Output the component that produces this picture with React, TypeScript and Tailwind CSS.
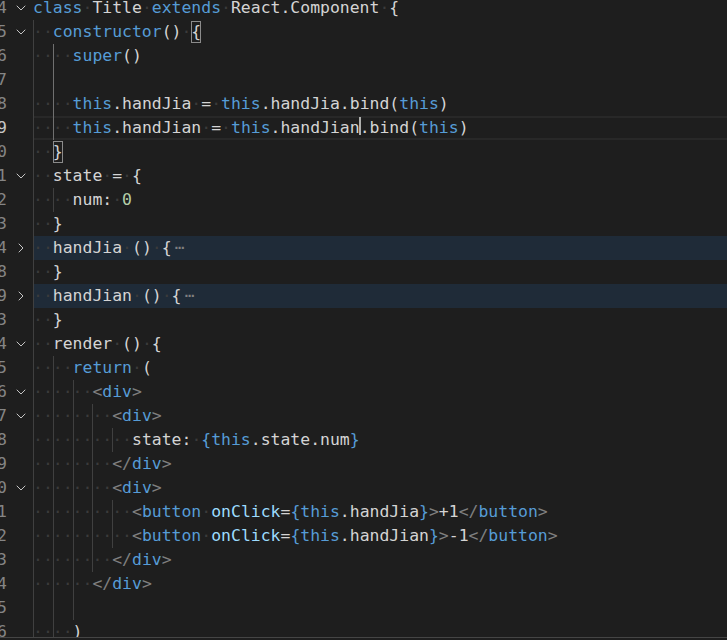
import React from "react";
import { ChevronDown, ChevronRight } from "lucide-react";

// token colours (VS Code "Dark" theme)
const K = "text-[#569cd6]";
const P = "text-[#d4d4d4]";
const A = "text-[#9cdcfe]";
const G = "text-[#808080]";
const N = "text-[#b5cea8]";
const BOX = "box";
const CUR = "cursor";

type Part = [string, string];

type Line = {
  n: number;
  indent: number;
  parts: Part[];
  fold?: "open" | "closed";
  folded?: boolean;
  current?: boolean;
};

const lines: Line[] = [
  { n: 4, indent: 0, fold: "open", parts: [[K, "class"], [P, " Title "], [K, "extends"], [P, " React.Component {"]] },
  { n: 5, indent: 1, fold: "open", parts: [[K, "constructor"], [P, "() "], [BOX, "{"]] },
  { n: 6, indent: 2, parts: [[K, "super"], [P, "()"]] },
  { n: 7, indent: 2, parts: [] },
  { n: 8, indent: 2, parts: [[K, "this"], [P, ".handJia = "], [K, "this"], [P, ".handJia.bind("], [K, "this"], [P, ")"]] },
  {
    n: 9,
    indent: 2,
    current: true,
    parts: [[K, "this"], [P, ".handJian = "], [K, "this"], [P, ".handJian"], [CUR, ""], [P, ".bind("], [K, "this"], [P, ")"]],
  },
  { n: 10, indent: 1, parts: [[BOX, "}"]] },
  { n: 11, indent: 1, fold: "open", parts: [[P, "state = {"]] },
  { n: 12, indent: 2, parts: [[P, "num: "], [N, "0"]] },
  { n: 13, indent: 1, parts: [[P, "}"]] },
  { n: 14, indent: 1, fold: "closed", folded: true, parts: [[P, "handJia () {"]] },
  { n: 18, indent: 1, parts: [[P, "}"]] },
  { n: 19, indent: 1, fold: "closed", folded: true, parts: [[P, "handJian () {"]] },
  { n: 23, indent: 1, parts: [[P, "}"]] },
  { n: 24, indent: 1, fold: "open", parts: [[P, "render () {"]] },
  { n: 25, indent: 2, parts: [[K, "return"], [P, " ("]] },
  { n: 26, indent: 3, fold: "open", parts: [[G, "<"], [K, "div"], [G, ">"]] },
  { n: 27, indent: 4, fold: "open", parts: [[G, "<"], [K, "div"], [G, ">"]] },
  { n: 28, indent: 5, parts: [[P, "state: "], [K, "{this"], [P, ".state.num"], [K, "}"]] },
  { n: 29, indent: 4, parts: [[G, "</"], [K, "div"], [G, ">"]] },
  { n: 30, indent: 4, fold: "open", parts: [[G, "<"], [K, "div"], [G, ">"]] },
  {
    n: 31,
    indent: 5,
    parts: [[G, "<"], [K, "button"], [P, " "], [A, "onClick"], [P, "="], [K, "{this"], [P, ".handJia"], [K, "}"], [G, ">"], [P, "+1"], [G, "</"], [K, "button"], [G, ">"]],
  },
  {
    n: 32,
    indent: 5,
    parts: [[G, "<"], [K, "button"], [P, " "], [A, "onClick"], [P, "="], [K, "{this"], [P, ".handJian"], [K, "}"], [G, ">"], [P, "-1"], [G, "</"], [K, "button"], [G, ">"]],
  },
  { n: 33, indent: 4, parts: [[G, "</"], [K, "div"], [G, ">"]] },
  { n: 34, indent: 3, parts: [[G, "</"], [K, "div"], [G, ">"]] },
  { n: 35, indent: 3, parts: [] },
  { n: 36, indent: 2, parts: [[P, ")"]] },
];

const Text = ({ text }: { text: string }) => (
  <>
    {text.split(/( )/).map((s, i) =>
      s === " " ? (
        <span key={i} className="text-[#3b3b3b]">
          ·
        </span>
      ) : (
        s
      )
    )}
  </>
);

const CodeLine = ({ line, row }: { line: Line; row: number }) => {
  const empty = line.parts.length === 0;
  // rows 2-5 sit inside the constructor where the cursor is: brighter guide
  const activeGuide = row >= 2 && row <= 5;

  return (
    <div className="flex h-[24px] leading-[24px]">
      <div className={`w-[7px] shrink-0 flex justify-end ${line.current ? "text-[#c6c6c6]" : "text-[#858585]"}`}>
        <span>{line.n}</span>
      </div>
      <div className="w-[16px] ml-[6px] shrink-0 flex items-center justify-center text-[#c5c5c5]">
        {line.fold === "open" && <ChevronDown size={16} strokeWidth={1.5} />}
        {line.fold === "closed" && <ChevronRight size={16} strokeWidth={1.5} />}
      </div>
      <div className="w-[4px] shrink-0" />
      <div
        className={`flex-1 whitespace-pre ${line.folded ? "bg-[#1f2b38]" : ""} ${
          line.current ? "shadow-[inset_0_2px_0_#282828,inset_0_-2px_0_#282828]" : ""
        }`}
      >
        {Array.from({ length: line.indent }).map((_, i) => (
          <span
            key={i}
            className={`inline-block h-[24px] align-top ${
              activeGuide && i === 1 ? "shadow-[inset_1px_0_0_#707070]" : "shadow-[inset_1px_0_0_#404040]"
            } ${empty ? "text-transparent" : "text-[#3b3b3b]"}`}
          >
            ··
          </span>
        ))}
        {line.parts.map(([cls, text], i) => {
          if (cls === CUR)
            return (
              <span key={i} className="relative">
                <span className="absolute left-[-1px] top-[-1px] w-[2px] h-[18px] bg-[#aeafad]" />
              </span>
            );
          if (cls === BOX)
            return (
              <span key={i} className="inline-block leading-[22px] text-[#d4d4d4] shadow-[inset_0_0_0_1px_#8b8b8b]">
                {text}
              </span>
            );
          return (
            <span key={i} className={cls}>
              <Text text={text} />
            </span>
          );
        })}
        {line.folded && <span className="ml-[3px] text-[#808080]">⋯</span>}
      </div>
    </div>
  );
};

const App: React.FC = () => {
  return (
    <div className="w-full h-[640px] bg-[#1e1e1e] overflow-hidden flex flex-col font-['DejaVu_Sans_Mono',monospace] text-[16.45px]">
      <div className="h-[637px] overflow-hidden shrink-0">
        <div className="-mt-[4px]">
          {lines.map((line, i) => (
            <CodeLine key={i} line={line} row={i} />
          ))}
        </div>
      </div>
      <div className="h-px bg-[#454545] shrink-0" />
    </div>
  );
};

export default App;
